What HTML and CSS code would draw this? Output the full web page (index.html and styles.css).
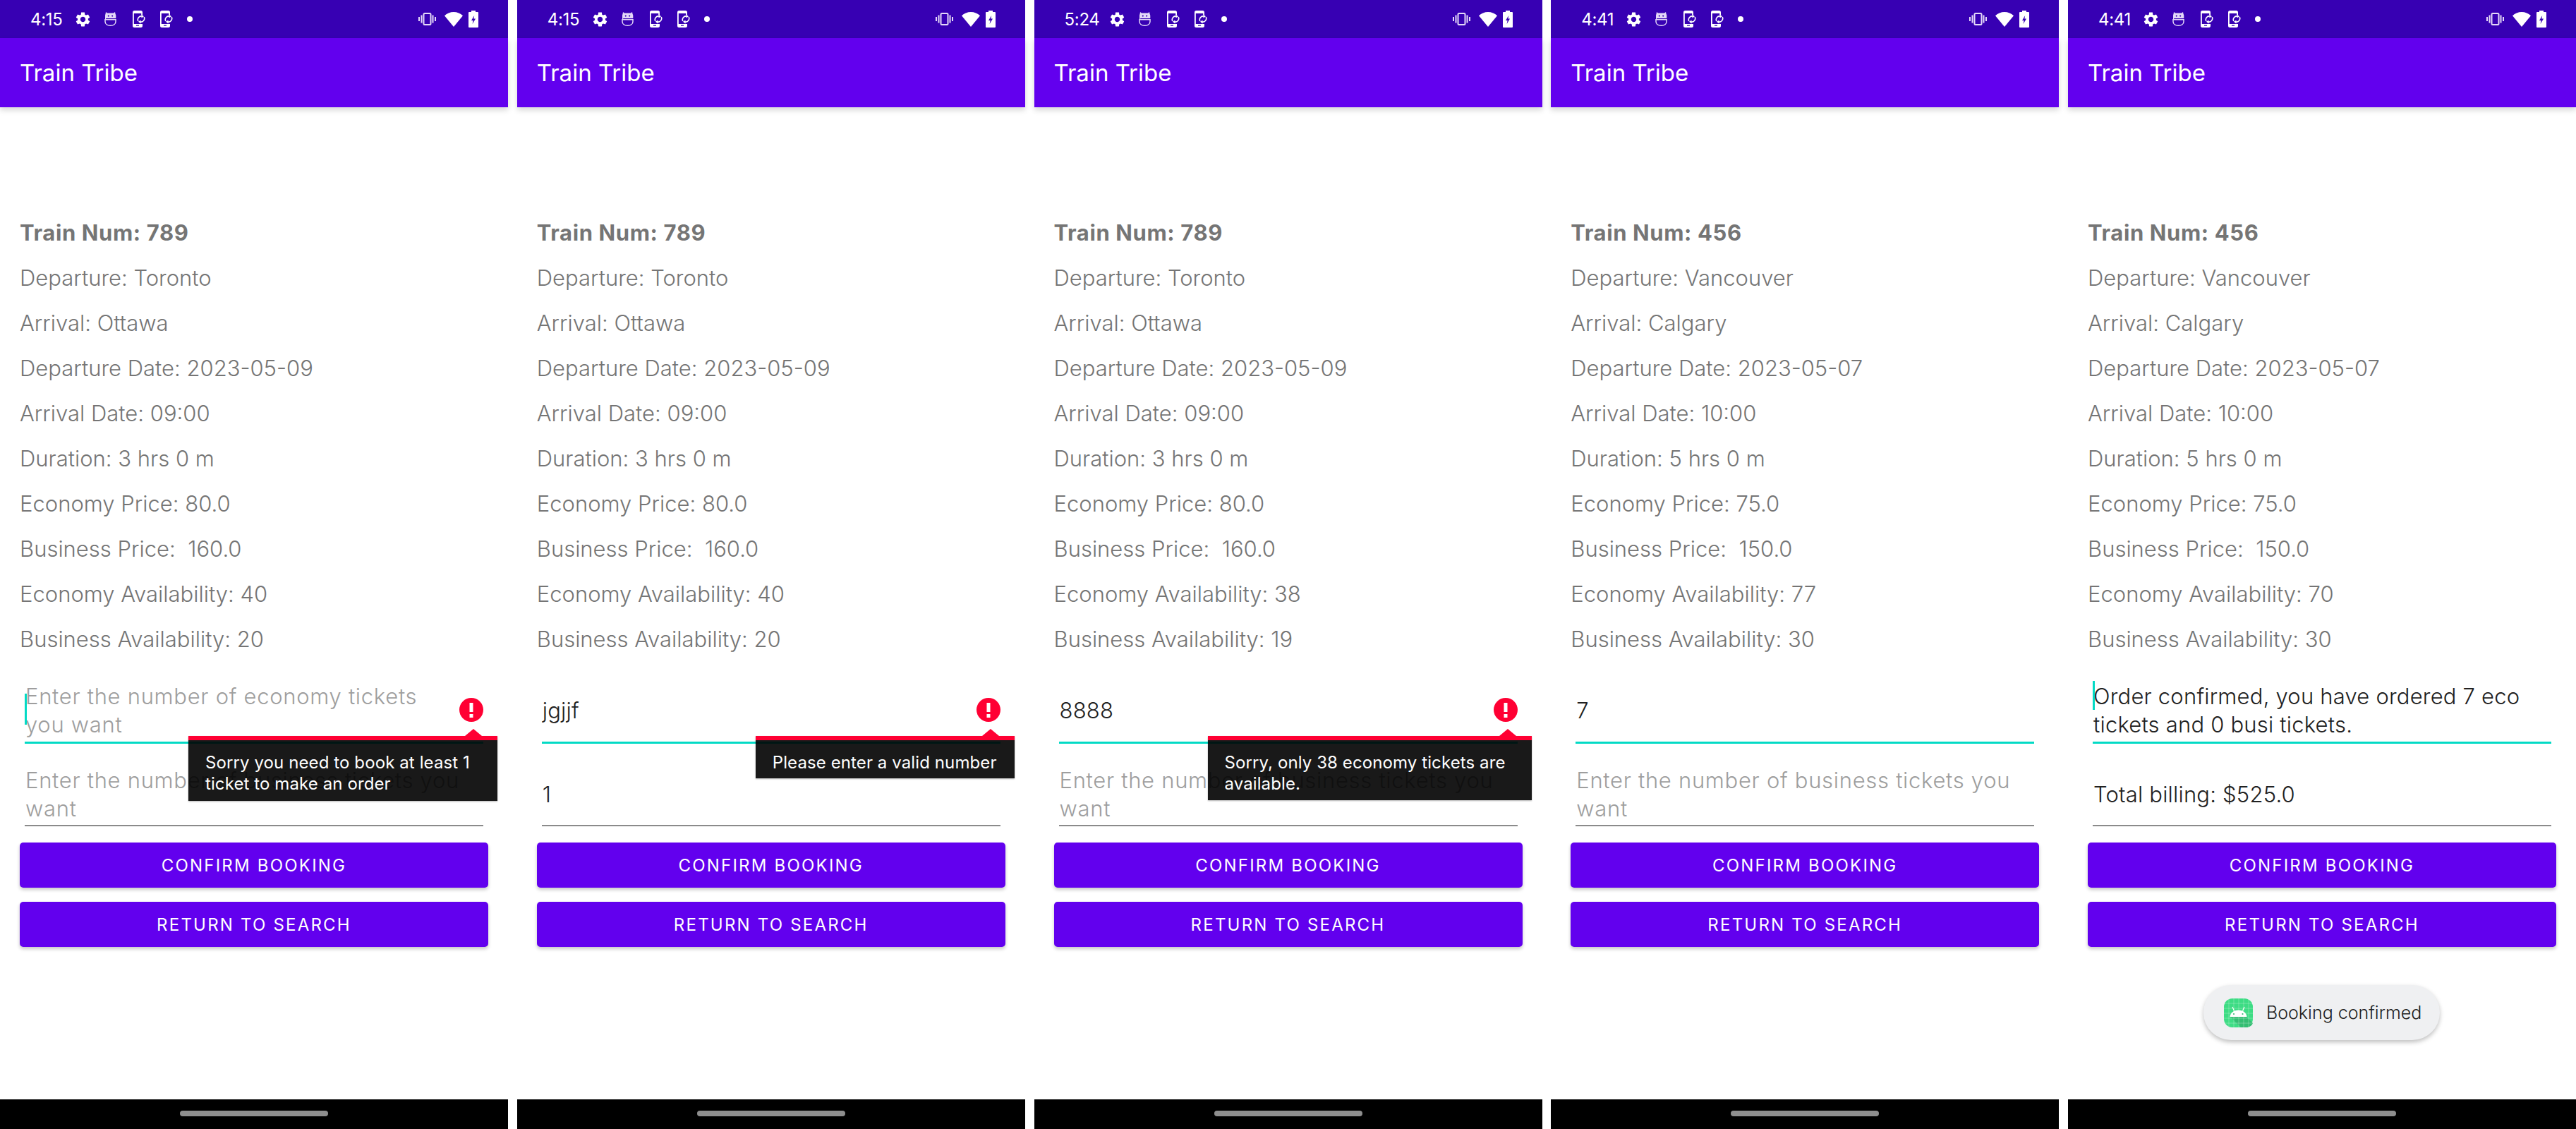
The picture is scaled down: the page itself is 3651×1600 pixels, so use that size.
FILE: index.html
```html
<!DOCTYPE html>
<html lang="en">
<head>
<meta charset="utf-8">
<title>Train Tribe</title>
<link rel="stylesheet" href="styles.css">
</head>
<body>
<svg class="defs" width="0" height="0" aria-hidden="true">
  <defs>
    <symbol id="i-gear" viewBox="2.4 1.8 19.2 20.4"><path fill="#fff" d="M19.14 12.94c.04-.3.06-.61.06-.94 0-.32-.02-.64-.07-.94l2.03-1.58c.18-.14.23-.41.12-.61l-1.92-3.32c-.12-.22-.37-.29-.59-.22l-2.39.96c-.5-.38-1.03-.7-1.62-.94l-.36-2.54c-.04-.24-.24-.41-.48-.41h-3.84c-.24 0-.43.17-.47.41l-.36 2.54c-.59.24-1.13.57-1.62.94l-2.39-.96c-.22-.08-.47 0-.59.22L2.74 8.87c-.12.21-.08.47.12.61l2.03 1.58c-.05.3-.09.63-.09.94s.02.64.07.94l-2.03 1.58c-.18.14-.23.41-.12.61l1.92 3.32c.12.22.37.29.59.22l2.39-.96c.5.38 1.03.7 1.62.94l.36 2.54c.05.24.24.41.48.41h3.84c.24 0 .44-.17.47-.41l.36-2.54c.59-.24 1.13-.56 1.62-.94l2.39.96c.22.08.47 0 .59-.22l1.92-3.32c.12-.22.07-.47-.12-.61l-2.01-1.58zM12 15.6c-1.98 0-3.6-1.62-3.6-3.6s1.62-3.6 3.6-3.6 3.6 1.62 3.6 3.6-1.62 3.6-3.6 3.6z"/></symbol>
    <symbol id="i-bot" viewBox="0 0 17 20"><path fill="#e4d8f8" fill-rule="evenodd" d="M2 0l2 1.500h9L15 0l.6 3c.5.6.7 1.400.7 2.500V9H2.200v1.200H1V5.500C1 4.400 1.100 3.600 1.500 3zM5.800 4.500a1.100 1.100 0 1 0 0 2.200 1.100 1.100 0 0 0 0-2.200zm5.400 0a1.100 1.100 0 1 0 0 2.200 1.100 1.100 0 0 0 0-2.200z"/><path fill="none" stroke="#e4d8f8" stroke-width="1.500" d="M1 10.800h15v2.700c0 3.300-3 5.700-7.500 5.700S1 16.800 1 13.500z"/></symbol>
    <symbol id="i-sync" viewBox="0 0 18 24"><path fill="#fff" fill-rule="evenodd" d="M2.500 0h9A2.500 2.500 0 0 1 14 2.500V6h-1.800V4H1.800v15H14v2.500A2.500 2.500 0 0 1 11.500 24h-9A2.500 2.500 0 0 1 0 21.500v-19A2.500 2.500 0 0 1 2.500 0zM5 20.500h4v1.300H5z"/><path fill="none" stroke="#fff" stroke-width="1.600" d="M7.800 15A5 5 0 0 1 13.500 8M16.200 9A5 5 0 0 1 10.500 16"/><path fill="#fff" d="M12.500 5.500l3.500 2.800-3.500 2.200zM11.500 13.500l-3.500 2.200 3.500 2.800z"/></symbol>
    <symbol id="i-vib" viewBox="0 0 25 18"><rect x="7.500" y="1" width="10" height="16" rx="1.500" fill="none" stroke="#e4d8f8" stroke-width="2"/><path fill="#e4d8f8" d="M3.500 3.500h2v11h-2zM19.500 3.500h2v11h-2zM0 6h2v6H0zM23 6h2v6h-2z"/></symbol>
    <symbol id="i-wifi" viewBox="0 0 26 21"><path fill="#fff" d="M13 0C8 0 3.500 2 0 5.200L13 21 26 5.200C22.500 2 18 0 13 0z"/></symbol>
    <symbol id="i-batt" viewBox="0 0 14 24"><path fill="#fff" fill-rule="evenodd" d="M4 0h6v2h3a1 1 0 0 1 1 1v20a1 1 0 0 1-1 1H1a1 1 0 0 1-1-1V3a1 1 0 0 1 1-1h3zM8.200 7L4 14h2.600l-1 5L10 11.500H7.400z"/></symbol>
    <symbol id="i-err" viewBox="0 0 34 34"><circle cx="17" cy="17" r="17" fill="#ff0033"/><rect x="14.500" y="7" width="5" height="13" fill="#fff"/><rect x="14.500" y="23" width="5" height="5" fill="#fff"/></symbol>
  </defs>
</svg>

<main class="gallery">

  <section class="phone">
    <header class="status">
      <span class="time">4:15</span>
      <svg class="ic gear"><use href="#i-gear"/></svg><svg class="ic bot"><use href="#i-bot"/></svg><svg class="ic sync"><use href="#i-sync"/></svg><svg class="ic sync"><use href="#i-sync"/></svg><span class="dot"></span>
      <span class="status-right"><svg class="ic vib"><use href="#i-vib"/></svg><svg class="ic wifi"><use href="#i-wifi"/></svg><svg class="ic batt"><use href="#i-batt"/></svg></span>
    </header>
    <div class="toolbar">Train Tribe</div>
    <div class="screen">
      <ul class="facts">
        <li class="head">Train Num: 789</li>
        <li>Departure: Toronto</li>
        <li>Arrival: Ottawa</li>
        <li>Departure Date: 2023-05-09</li>
        <li>Arrival Date: 09:00</li>
        <li>Duration: 3 hrs 0 m</li>
        <li>Economy Price: 80.0</li>
        <li>Business Price:&nbsp; 160.0</li>
        <li>Economy Availability: 40</li>
        <li>Business Availability: 20</li>
      </ul>
      <div class="field focus"><span class="cursor low"></span><span class="hint has-icon">Enter the number of economy tickets you want</span>
        <svg class="err"><use href="#i-err"/></svg>
        <div class="tip tip-a"><span class="tip-arrow"></span>Sorry you need to book at least 1 ticket to make an order</div>
      </div>
      <div class="field second"><span class="hint">Enter the number of business tickets you want</span></div>
      <div class="btn">Confirm Booking</div>
      <div class="btn">Return to Search</div>
    </div>
    <footer class="nav"><span class="pill"></span></footer>
  </section>

  <section class="phone">
    <header class="status">
      <span class="time">4:15</span>
      <svg class="ic gear"><use href="#i-gear"/></svg><svg class="ic bot"><use href="#i-bot"/></svg><svg class="ic sync"><use href="#i-sync"/></svg><svg class="ic sync"><use href="#i-sync"/></svg><span class="dot"></span>
      <span class="status-right"><svg class="ic vib"><use href="#i-vib"/></svg><svg class="ic wifi"><use href="#i-wifi"/></svg><svg class="ic batt"><use href="#i-batt"/></svg></span>
    </header>
    <div class="toolbar">Train Tribe</div>
    <div class="screen">
      <ul class="facts">
        <li class="head">Train Num: 789</li>
        <li>Departure: Toronto</li>
        <li>Arrival: Ottawa</li>
        <li>Departure Date: 2023-05-09</li>
        <li>Arrival Date: 09:00</li>
        <li>Duration: 3 hrs 0 m</li>
        <li>Economy Price: 80.0</li>
        <li>Business Price:&nbsp; 160.0</li>
        <li>Economy Availability: 40</li>
        <li>Business Availability: 20</li>
      </ul>
      <div class="field focus"><span class="val">jgjjf</span>
        <svg class="err"><use href="#i-err"/></svg>
        <div class="tip tip-b"><span class="tip-arrow"></span>Please enter a valid number</div>
      </div>
      <div class="field second"><span class="val">1</span></div>
      <div class="btn">Confirm Booking</div>
      <div class="btn">Return to Search</div>
    </div>
    <footer class="nav"><span class="pill"></span></footer>
  </section>

  <section class="phone">
    <header class="status">
      <span class="time">5:24</span>
      <svg class="ic gear"><use href="#i-gear"/></svg><svg class="ic bot"><use href="#i-bot"/></svg><svg class="ic sync"><use href="#i-sync"/></svg><svg class="ic sync"><use href="#i-sync"/></svg><span class="dot"></span>
      <span class="status-right"><svg class="ic vib"><use href="#i-vib"/></svg><svg class="ic wifi"><use href="#i-wifi"/></svg><svg class="ic batt"><use href="#i-batt"/></svg></span>
    </header>
    <div class="toolbar">Train Tribe</div>
    <div class="screen">
      <ul class="facts">
        <li class="head">Train Num: 789</li>
        <li>Departure: Toronto</li>
        <li>Arrival: Ottawa</li>
        <li>Departure Date: 2023-05-09</li>
        <li>Arrival Date: 09:00</li>
        <li>Duration: 3 hrs 0 m</li>
        <li>Economy Price: 80.0</li>
        <li>Business Price:&nbsp; 160.0</li>
        <li>Economy Availability: 38</li>
        <li>Business Availability: 19</li>
      </ul>
      <div class="field focus"><span class="val">8888</span>
        <svg class="err"><use href="#i-err"/></svg>
        <div class="tip tip-c"><span class="tip-arrow"></span>Sorry, only 38 economy tickets are available.</div>
      </div>
      <div class="field second"><span class="hint">Enter the number of business tickets you want</span></div>
      <div class="btn">Confirm Booking</div>
      <div class="btn">Return to Search</div>
    </div>
    <footer class="nav"><span class="pill"></span></footer>
  </section>

  <section class="phone">
    <header class="status">
      <span class="time">4:41</span>
      <svg class="ic gear"><use href="#i-gear"/></svg><svg class="ic bot"><use href="#i-bot"/></svg><svg class="ic sync"><use href="#i-sync"/></svg><svg class="ic sync"><use href="#i-sync"/></svg><span class="dot"></span>
      <span class="status-right"><svg class="ic vib"><use href="#i-vib"/></svg><svg class="ic wifi"><use href="#i-wifi"/></svg><svg class="ic batt"><use href="#i-batt"/></svg></span>
    </header>
    <div class="toolbar">Train Tribe</div>
    <div class="screen">
      <ul class="facts">
        <li class="head">Train Num: 456</li>
        <li>Departure: Vancouver</li>
        <li>Arrival: Calgary</li>
        <li>Departure Date: 2023-05-07</li>
        <li>Arrival Date: 10:00</li>
        <li>Duration: 5 hrs 0 m</li>
        <li>Economy Price: 75.0</li>
        <li>Business Price:&nbsp; 150.0</li>
        <li>Economy Availability: 77</li>
        <li>Business Availability: 30</li>
      </ul>
      <div class="field focus"><span class="val">7</span></div>
      <div class="field second"><span class="hint">Enter the number of business tickets you want</span></div>
      <div class="btn">Confirm Booking</div>
      <div class="btn">Return to Search</div>
    </div>
    <footer class="nav"><span class="pill"></span></footer>
  </section>

  <section class="phone">
    <header class="status">
      <span class="time">4:41</span>
      <svg class="ic gear"><use href="#i-gear"/></svg><svg class="ic bot"><use href="#i-bot"/></svg><svg class="ic sync"><use href="#i-sync"/></svg><svg class="ic sync"><use href="#i-sync"/></svg><span class="dot"></span>
      <span class="status-right"><svg class="ic vib"><use href="#i-vib"/></svg><svg class="ic wifi"><use href="#i-wifi"/></svg><svg class="ic batt"><use href="#i-batt"/></svg></span>
    </header>
    <div class="toolbar">Train Tribe</div>
    <div class="screen">
      <ul class="facts">
        <li class="head">Train Num: 456</li>
        <li>Departure: Vancouver</li>
        <li>Arrival: Calgary</li>
        <li>Departure Date: 2023-05-07</li>
        <li>Arrival Date: 10:00</li>
        <li>Duration: 5 hrs 0 m</li>
        <li>Economy Price: 75.0</li>
        <li>Business Price:&nbsp; 150.0</li>
        <li>Economy Availability: 70</li>
        <li>Business Availability: 30</li>
      </ul>
      <div class="field focus"><span class="cursor high"></span><span class="val">Order confirmed, you have ordered 7 eco tickets and 0 busi tickets.</span></div>
      <div class="field second"><span class="val">Total billing: $525.0</span></div>
      <div class="btn">Confirm Booking</div>
      <div class="btn">Return to Search</div>
      <div class="toast">
        <svg class="toast-icon" viewBox="0 0 41 41">
          <rect width="41" height="41" rx="12" fill="#3ddc84"/>
          <path fill="#33bd72" d="M9 26h23l9 9c-1.500 3.500-5 6-9 6h-8z"/>
          <path stroke="#fff" stroke-opacity=".28" stroke-width="1" d="M0 7h41M0 14h41M0 21h41M0 28h41M0 35h41M7 0v41M14 0v41M21 0v41M28 0v41M35 0v41"/>
          <path fill="#fff" d="M8.500 26c.5-5.500 5.500-9.500 12-9.500s11.500 4 12 9.500z"/>
          <path stroke="#fff" stroke-width="1.200" d="M14.500 17.500l-2.500-5.500M26.500 17.500l2.500-5.500"/>
          <circle cx="14" cy="22" r="1.100" fill="#33bd72"/><circle cx="26.500" cy="22" r="1.100" fill="#33bd72"/>
        </svg>
        <span>Booking confirmed</span>
      </div>
    </div>
    <footer class="nav"><span class="pill"></span></footer>
  </section>

</main>
</body>
</html>
```
FILE: styles.css
```css
* { box-sizing: border-box; }
html, body { margin: 0; padding: 0; background: #fff; }
.defs { position: absolute; }
.gallery {
  display: flex;
  justify-content: space-between;
  width: 3651px;
  height: 1600px;
  font-family: Inter, "Liberation Sans", sans-serif;
}
.phone {
  width: 720px;
  height: 1600px;
  display: flex;
  flex-direction: column;
  background: #fff;
}
.status {
  height: 54px;
  background: #3700b3;
  color: #fff;
  display: flex;
  align-items: center;
  padding: 0 42px 0 43px;
  font-size: 24px;
  font-weight: 400;
}
.time { width: 45px; margin-right: 19px; white-space: nowrap; letter-spacing: -.3px; }
.ic { display: block; flex: none; }
.gear { width: 21px; height: 21px; margin-right: 20px; }
.bot { width: 17px; height: 20px; margin-right: 23px; }
.sync { width: 18px; height: 24px; margin-right: 21px; }
.dot { width: 8px; height: 8px; border-radius: 50%; background: #fff; margin-left: -1px; }
.status-right { margin-left: auto; display: flex; align-items: center; }
.vib { width: 25px; height: 18px; margin-right: 12px; }
.wifi { width: 26px; height: 21px; margin-right: 8px; }
.batt { width: 14px; height: 24px; }
.toolbar {
  height: 98px;
  background: #6200ee;
  color: #fff;
  display: flex;
  align-items: center;
  padding-left: 28px;
  font-size: 33px;
  box-shadow: 0 4px 8px rgba(0,0,0,.16);
  position: relative;
}
.screen {
  flex: 1;
  position: relative;
  display: flex;
  flex-direction: column;
  padding: 146px 28px 0;
}
.facts { list-style: none; margin: 0 0 22px; padding: 0; }
.facts li {
  height: 64px;
  line-height: 64px;
  font-size: 31px;
  font-weight: 300;
  color: #757575;
  white-space: nowrap;
}
.facts .head { font-weight: 700; letter-spacing: .6px; }
.field {
  position: relative;
  height: 94px;
  margin: 0 7px 23px;
  display: flex;
  align-items: center;
  border-bottom: 2px solid #8b8b8b;
  font-size: 31px;
  font-weight: 300;
  line-height: 40px;
  padding: 2px 0 0 1px;
}
.field.second { padding-top: 5px; }
.field.focus { border-bottom: 3px solid #03dac5; }
.hint { color: #9e9e9e; letter-spacing: .7px; }
.hint.has-icon { padding-right: 60px; }
.val { color: #212121; letter-spacing: .2px; }
.cursor { position: absolute; left: 0; width: 3px; background: #03dac5; }
.cursor.low { top: 23px; height: 44px; }
.cursor.high { top: 5px; height: 41px; }
.err { position: absolute; right: 0; top: 29px; width: 34px; height: 34px; }
.tip {
  position: absolute;
  top: 83px;
  right: -20px;
  z-index: 2;
  background: rgba(0,0,0,.9);
  border-top: 6px solid #ff0033;
  color: #fff;
  font-size: 24px;
  font-weight: 400;
  letter-spacing: .1px;
  line-height: 30px;
  padding: 17px 24px 0;
  box-shadow: 0 1px 2px rgba(0,0,0,.3);
}
.tip-a { width: 438px; height: 92px; }
.tip-b { width: 367px; height: 60px; }
.tip-c { width: 459px; height: 91px; }
.tip-arrow {
  position: absolute;
  top: -16px;
  right: 22px;
  border-left: 12px solid transparent;
  border-right: 12px solid transparent;
  border-bottom: 10px solid #ff0033;
}
.btn {
  height: 64px;
  background: #6200ee;
  color: #fff;
  border-radius: 5px;
  display: flex;
  align-items: center;
  justify-content: center;
  font-size: 24px;
  font-weight: 400;
  letter-spacing: 2.2px;
  text-transform: uppercase;
  box-shadow: 0 3px 5px rgba(0,0,0,.22);
  margin-bottom: 20px;
}
.toast {
  position: absolute;
  left: 192px;
  top: 1244px;
  width: 335px;
  height: 78px;
  border-radius: 39px;
  background: #eff0f2;
  box-shadow: 0 3px 6px rgba(0,0,0,.25);
  display: flex;
  align-items: center;
  padding-left: 29px;
  font-size: 25px;
  font-weight: 300;
  color: #212121;
  white-space: nowrap;
}
.toast-icon { width: 41px; height: 41px; margin-right: 19px; flex: none; }
.nav {
  height: 42px;
  background: #000;
  display: flex;
  justify-content: center;
  padding-top: 16px;
}
.pill { width: 210px; height: 8px; border-radius: 4px; background: #8e8e8e; }
```
